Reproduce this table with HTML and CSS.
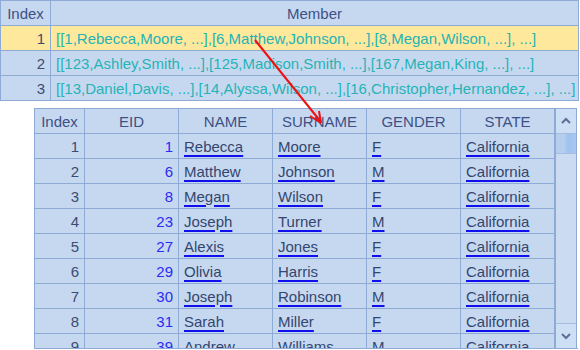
FILE: index.html
```html
<!DOCTYPE html>
<html>
<head>
<meta charset="utf-8">
<link rel="stylesheet" href="styles.css">
</head>
<body>
<div class="page">
  <table class="seq">
    <colgroup><col class="c-idx"><col></colgroup>
    <thead>
      <tr><th>Index</th><th>Member</th></tr>
    </thead>
    <tbody>
      <tr class="sel"><td class="num">1</td><td class="mem">[[1,Rebecca,Moore, ...],[6,Matthew,Johnson, ...],[8,Megan,Wilson, ...], ...]</td></tr>
      <tr><td class="num">2</td><td class="mem">[[123,Ashley,Smith, ...],[125,Madison,Smith, ...],[167,Megan,King, ...], ...]</td></tr>
      <tr><td class="num">3</td><td class="mem">[[13,Daniel,Davis, ...],[14,Alyssa,Wilson, ...],[16,Christopher,Hernandez, ...], ...]</td></tr>
    </tbody>
  </table>

  <div class="detail">
    <table class="rec">
      <colgroup><col class="c-idx"><col class="c"><col class="c"><col class="c"><col class="c"><col class="c"></colgroup>
      <thead>
        <tr><th>Index</th><th>EID</th><th>NAME</th><th>SURNAME</th><th>GENDER</th><th>STATE</th></tr>
      </thead>
      <tbody>
        <tr><td class="num">1</td><td class="eid">1</td><td><span class="lk">Rebecca</span></td><td><span class="lk">Moore</span></td><td><span class="lk">F</span></td><td><span class="lk">California</span></td></tr>
        <tr><td class="num">2</td><td class="eid">6</td><td><span class="lk">Matthew</span></td><td><span class="lk">Johnson</span></td><td><span class="lk">M</span></td><td><span class="lk">California</span></td></tr>
        <tr><td class="num">3</td><td class="eid">8</td><td><span class="lk">Megan</span></td><td><span class="lk">Wilson</span></td><td><span class="lk">F</span></td><td><span class="lk">California</span></td></tr>
        <tr><td class="num">4</td><td class="eid">23</td><td><span class="lk">Joseph</span></td><td><span class="lk">Turner</span></td><td><span class="lk">M</span></td><td><span class="lk">California</span></td></tr>
        <tr><td class="num">5</td><td class="eid">27</td><td><span class="lk">Alexis</span></td><td><span class="lk">Jones</span></td><td><span class="lk">F</span></td><td><span class="lk">California</span></td></tr>
        <tr><td class="num">6</td><td class="eid">29</td><td><span class="lk">Olivia</span></td><td><span class="lk">Harris</span></td><td><span class="lk">F</span></td><td><span class="lk">California</span></td></tr>
        <tr><td class="num">7</td><td class="eid">30</td><td><span class="lk">Joseph</span></td><td><span class="lk">Robinson</span></td><td><span class="lk">M</span></td><td><span class="lk">California</span></td></tr>
        <tr><td class="num">8</td><td class="eid">31</td><td><span class="lk">Sarah</span></td><td><span class="lk">Miller</span></td><td><span class="lk">F</span></td><td><span class="lk">California</span></td></tr>
        <tr><td class="num">9</td><td class="eid">39</td><td><span class="lk">Andrew</span></td><td><span class="lk">Williams</span></td><td><span class="lk">M</span></td><td><span class="lk">California</span></td></tr>
      </tbody>
    </table>
    <div class="scroll">
      <div class="sbtn"><svg width="12" height="8" viewBox="0 0 12 8"><path d="M2 6 L6 2 L10 6" fill="none" stroke="#5a6f96" stroke-width="2"/></svg></div>
      <div class="track"><div class="thumb"></div></div>
      <div class="sbtn"><svg width="12" height="8" viewBox="0 0 12 8"><path d="M2 2 L6 6 L10 2" fill="none" stroke="#5a6f96" stroke-width="2"/></svg></div>
    </div>
  </div>

  <svg class="arrow" width="580" height="350" viewBox="0 0 580 350">
    <line x1="255" y1="40" x2="321" y2="122" stroke="#ee1111" stroke-width="2"/>
    <path d="M321 123 L310 116 M321 123 L319 111" stroke="#ee1111" stroke-width="2" fill="none"/>
  </svg>
</div>
</body>
</html>
```

FILE: styles.css
```css
html, body {
  margin: 0;
  padding: 0;
  background: #ffffff;
}
body {
  font-family: "Liberation Sans", Arial, sans-serif;
  font-size: 15px;
  width: 580px;
  height: 350px;
  overflow: hidden;
}
.page {
  position: relative;
  width: 580px;
  height: 350px;
  overflow: hidden;
}
table {
  border-collapse: collapse;
  table-layout: fixed;
}
th, td {
  border: 1px solid #8eabd6;
  height: 24px;
  padding: 0 5px;
  white-space: nowrap;
  overflow: hidden;
  background: #c6d8f0;
  line-height: 23px;
}
th {
  font-weight: normal;
  color: #3d5186;
  text-align: center;
}
.seq {
  width: 579px;
}
.c-idx { width: 50px; }
.c { width: 94px; }
.num {
  text-align: right;
  color: #3d4b6f;
}
.mem {
  color: #26b3b5;
}
.sel td {
  background: #fde89c;
}
.detail {
  margin: 7px 0 0 34px;
  display: flex;
  align-items: flex-start;
  height: 240px;
  overflow: hidden;
  border-bottom: 1px solid #8eabd6;
  width: 544px;
}
.rec {
  width: 521px;
  flex: none;
}
.eid {
  text-align: right;
  color: #2b2bf5;
}
.lk {
  color: #33466f;
  text-decoration: underline;
  text-decoration-color: #1010ee;
  text-decoration-thickness: 2px;
  text-underline-offset: 3px;
}
.scroll {
  flex: none;
  width: 22px;
  height: 240px;
  border: 1px solid #8eabd6;
  border-bottom: none;
  background: #cbdcf2;
  display: flex;
  flex-direction: column;
  box-sizing: border-box;
}
.sbtn {
  height: 24px;
  flex: none;
  display: flex;
  align-items: center;
  justify-content: center;
  background: #cddff4;
  border-bottom: 1px solid #a6bde0;
}
.sbtn:last-child {
  border-bottom: none;
  border-top: 1px solid #a6bde0;
}
.track {
  flex: 1;
  background: #cbdcf2;
}
.thumb {
  height: 19px;
  background: linear-gradient(to right, #b6cdee 0%, #b6cdee 40%, #9ec2f1 60%, #a9c8f0 100%);
  border-bottom: 1px solid #a6bde0;
}
.arrow {
  position: absolute;
  left: 0;
  top: 0;
  pointer-events: none;
}
```
